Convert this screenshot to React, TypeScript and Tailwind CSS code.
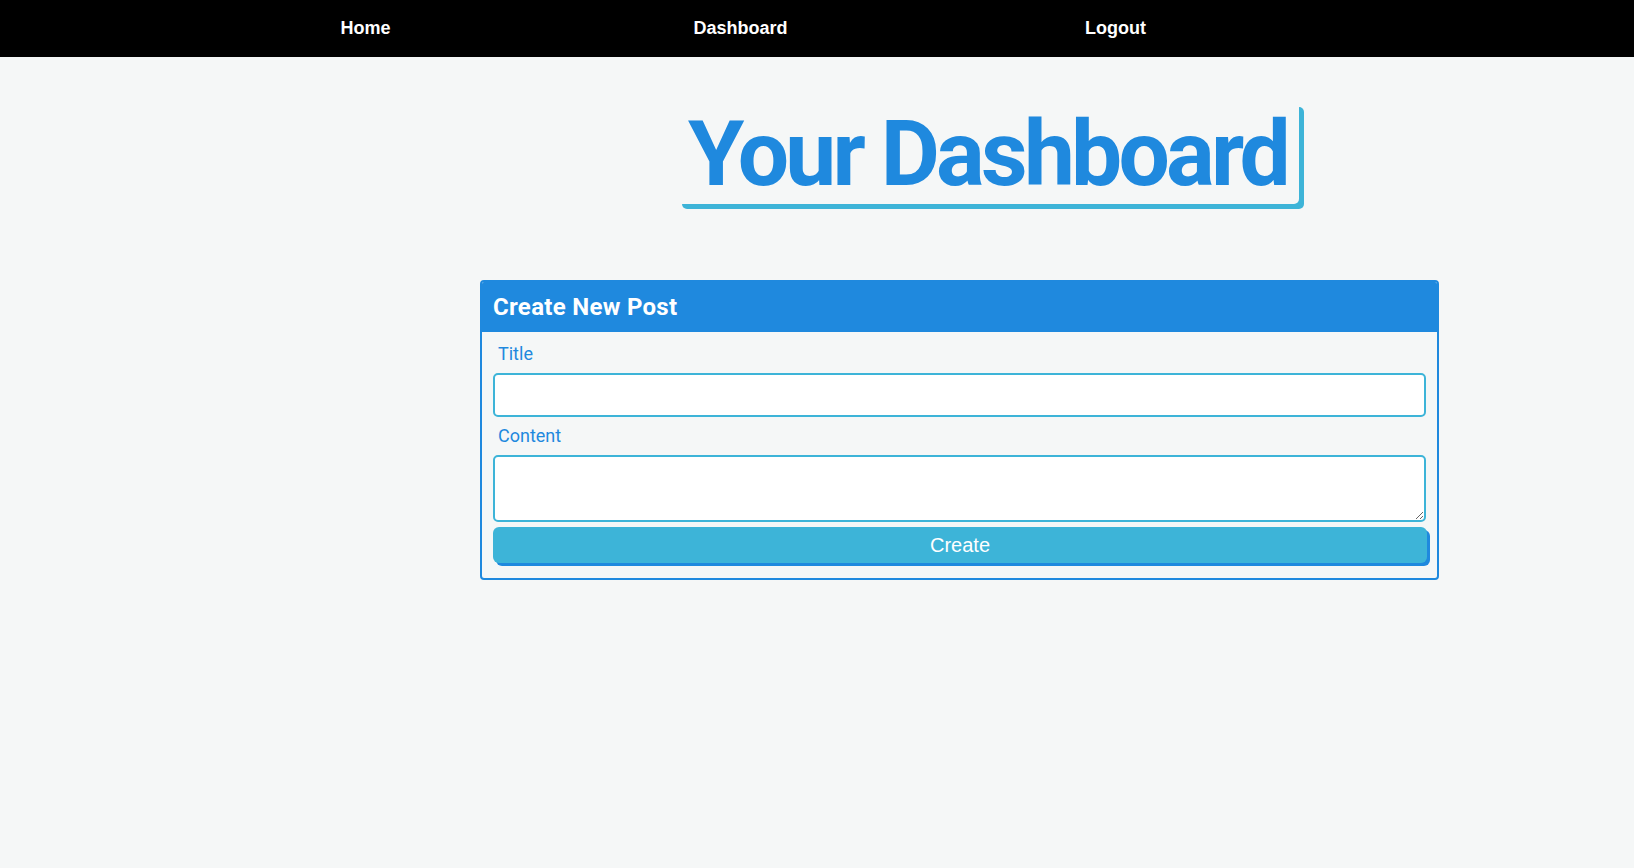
import React from "react";

const navLinks = ["Home", "Dashboard", "Logout"];

export default function App() {
  return (
    <div className="min-h-[868px] bg-[#f5f7f7]">
      <nav className="h-[57px] bg-black">
        <ul className="ml-[178px] grid h-full w-[1125px] grid-cols-3 items-center text-center">
          {navLinks.map((link) => (
            <li key={link}>
              <a href="#" className="font-['Liberation_Sans',Arial,sans-serif] text-[18px] font-bold text-white">
                {link}
              </a>
            </li>
          ))}
        </ul>
      </nav>

      <main>
        <div className="ml-[677px] mt-[45px] inline-block rounded-[5px] pl-[11px] pr-[12px] shadow-[5px_5px_0_#3db4d8]">
          <h1 className="pt-[3px] font-['Roboto',sans-serif] text-[91px] font-bold leading-[99px] tracking-[-3.8px] text-[#1f89de]">
            Your Dashboard
          </h1>
        </div>

        <section className="ml-[480px] mt-[76px] w-[959px] overflow-hidden rounded-[4px] border-2 border-[#1f89de] font-['Roboto',sans-serif]">
          <header className="flex h-[50px] items-center bg-[#1f89de] px-[11px]">
            <h2 className="text-[24px] font-bold tracking-[0.3px] text-white">Create New Post</h2>
          </header>
          <form className="flex flex-col gap-[5px] px-[11px] pb-[12px] pt-[8px]">
            <label className="pl-[5px] text-[18px] leading-[28px] text-[#1f89de]">Title</label>
            <input
              type="text"
              className="h-[44px] w-full rounded-[5px] border-2 border-[#3db4d8] bg-white px-2 outline-none"
            />
            <label className="pl-[5px] text-[18px] leading-[28px] text-[#1f89de]">Content</label>
            <textarea className="h-[67px] w-full rounded-[5px] border-2 border-[#3db4d8] bg-white px-2 outline-none" />
            <button
              type="button"
              className="mb-[3px] h-[36px] w-[934px] rounded-[6px] bg-[#3db4d8] font-['Liberation_Sans',Arial,sans-serif] text-[20px] text-white shadow-[3px_3px_0_#1f89de]"
            >
              Create
            </button>
          </form>
        </section>
      </main>
    </div>
  );
}
